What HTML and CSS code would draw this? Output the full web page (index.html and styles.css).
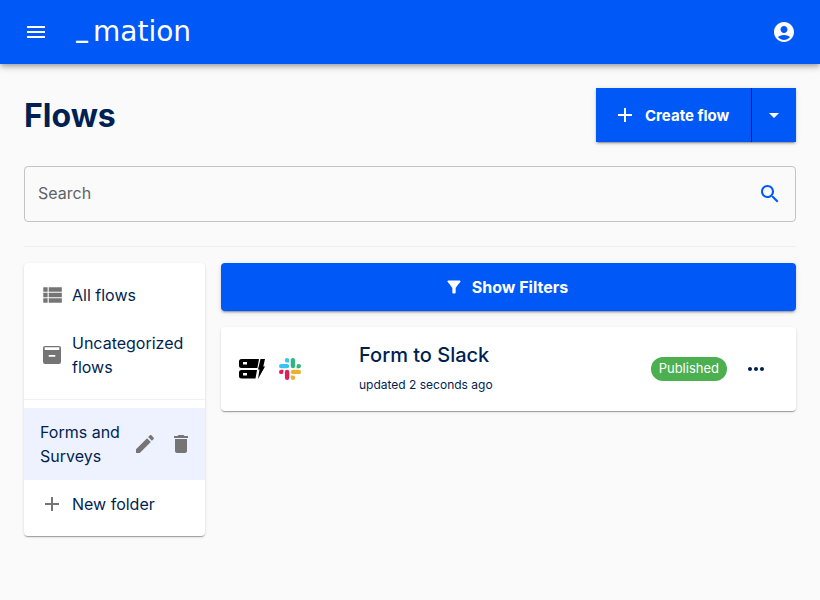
FILE: index.html
```html
<!DOCTYPE html>
<html lang="en">
<head>
<meta charset="utf-8">
<title>Flows</title>
<link rel="stylesheet" href="styles.css">
</head>
<body>
<header class="appbar">
  <svg class="icon menu-icon" viewBox="0 0 24 24"><path d="M3 18h18v-2H3v2zm0-5h18v-2H3v2zm0-7v2h18V6H3z"/></svg>
  <span class="logo"><span class="logo-bar">_</span>mation</span>
  <svg class="icon account-icon" viewBox="0 0 24 24"><path d="M12 2C6.48 2 2 6.48 2 12s4.48 10 10 10 10-4.48 10-10S17.520 2 12 2zm0 4c1.930 0 3.500 1.570 3.500 3.500S13.930 13 12 13s-3.500-1.570-3.500-3.500S10.070 6 12 6zm0 14c-2.030 0-4.430-.82-6.140-2.880C7.550 15.800 9.680 15 12 15s4.450.8 6.140 2.120C16.430 19.180 14.030 20 12 20z"/></svg>
</header>
<main class="page">
  <div class="title-row">
    <h1 class="title">Flows</h1>
    <div class="split-button">
      <button class="create-btn">
        <svg class="icon plus-icon" viewBox="0 0 24 24"><path d="M19 13h-6v6h-2v-6H5v-2h6V5h2v6h6v2z"/></svg>
        Create flow
      </button>
      <button class="caret-btn"><svg class="icon caret-icon" viewBox="0 0 24 24"><path d="M7 10l5 5 5-5z"/></svg></button>
    </div>
  </div>
  <div class="search">
    <span class="search-label">Search</span>
    <svg class="icon search-icon" viewBox="0 0 24 24"><path d="M15.500 14h-.79l-.28-.27C15.410 12.590 16 11.110 16 9.500 16 5.910 13.090 3 9.500 3S3 5.910 3 9.500 5.910 16 9.500 16c1.610 0 3.090-.59 4.230-1.570l.27.28v.79l5 4.990L20.490 19l-4.990-5zm-6 0C7.010 14 5 11.990 5 9.500S7.010 5 9.500 5 14 7.010 14 9.500 11.990 14 9.500 14z"/></svg>
  </div>
  <hr class="divider">
  <div class="columns">
    <aside class="sidebar">
      <div class="side-item side-item-first">
        <svg class="icon side-icon" viewBox="1 1 22 22"><path d="M4 14h4v-4H4v4zm0 5h4v-4H4v4zM4 9h4V5H4v4zm5 5h12v-4H9v4zm0 5h12v-4H9v4zM9 5v4h12V5H9z"/></svg>
        <span>All flows</span>
      </div>
      <div class="side-item side-item-second">
        <svg class="icon side-icon" viewBox="0 0 24 24"><path fill-rule="evenodd" d="M5 3h14a2 2 0 0 1 2 2v14a2 2 0 0 1-2 2H5a2 2 0 0 1-2-2V5a2 2 0 0 1 2-2zM4.700 4.300V7h14.600V4.300zM8.700 12v1.800h6.600V12z"/></svg>
        <span>Uncategorized flows</span>
      </div>
      <div class="side-sep"></div>
      <div class="folder">
        <span class="folder-name">Forms and Surveys</span>
        <svg class="icon folder-icon" viewBox="0 0 24 24"><path d="M3 17.250V21h3.750L17.810 9.940l-3.750-3.750L3 17.250zM20.710 7.040c.39-.39.39-1.020 0-1.410l-2.340-2.340c-.39-.39-1.020-.39-1.410 0l-1.830 1.830 3.750 3.750 1.830-1.830z"/></svg>
        <svg class="icon folder-icon" viewBox="0 0 24 24"><path d="M6 19c0 1.100.9 2 2 2h8c1.100 0 2-.9 2-2V7H6v12zM19 4h-3.500l-1-1h-5l-1 1H5v2h14V4z"/></svg>
      </div>
      <div class="side-item side-item-new">
        <svg class="icon side-icon" viewBox="0 0 24 24"><path d="M19 13h-6v6h-2v-6H5v-2h6V5h2v6h6v2z"/></svg>
        <span>New folder</span>
      </div>
    </aside>
    <section class="content">
      <button class="filter-btn">
        <svg class="icon filter-icon" viewBox="0 0 24 24"><path d="M4.250 5.610C6.270 8.200 10 13 10 13v6c0 .55.45 1 1 1h2c.55 0 1-.45 1-1v-6s3.720-4.800 5.740-7.390C20.250 4.950 19.780 4 18.950 4H5.040c-.83 0-1.300.95-.79 1.610z"/></svg>
        Show Filters
      </button>
      <article class="flow-card">
        <div class="apps">
          <svg class="app-logo" viewBox="0 0 26 22">
            <path fill="#000" fill-rule="evenodd" d="M2.500 1H20l-1.600 9H2.500A2.500 2.500 0 0 1 0 7.500v-4A2.500 2.500 0 0 1 2.500 1zM4 4v2.500h4V4zM2.500 12H18l-1.500 8.500h-14A2.500 2.500 0 0 1 0 18v-3.500A2.500 2.500 0 0 1 2.500 12zM4 15v2.500h4V15z"/>
            <path fill="#000" d="M21.500 1H26l-1.700 7.500H26L19 21l1.500-9.500H19z"/>
          </svg>
          <svg class="app-logo slack-logo" viewBox="0 0 24 24">
            <path fill="#36C5F0" d="M9 1a2.200 2.200 0 0 0 0 4.400h2.200V3.200A2.200 2.200 0 0 0 9 1zm0 5.900H3.200a2.200 2.200 0 0 0 0 4.400H9a2.200 2.200 0 0 0 0-4.400z"/>
            <path fill="#2EB67D" d="M23 9.100a2.200 2.200 0 0 0-4.400 0v2.200h2.200A2.200 2.200 0 0 0 23 9.100zm-5.900 0V3.200a2.200 2.200 0 0 0-4.400 0v5.900a2.200 2.200 0 0 0 4.400 0z"/>
            <path fill="#ECB22E" d="M15 23a2.200 2.200 0 0 0 0-4.400h-2.200v2.200A2.200 2.200 0 0 0 15 23zm0-5.900h5.800a2.200 2.200 0 0 0 0-4.400H15a2.200 2.200 0 0 0 0 4.400z"/>
            <path fill="#E01E5A" d="M1 14.900a2.200 2.200 0 0 0 4.400 0v-2.200H3.200A2.200 2.200 0 0 0 1 14.900zm5.900 0v5.900a2.200 2.200 0 0 0 4.400 0v-5.900a2.200 2.200 0 0 0-4.400 0z"/>
          </svg>
        </div>
        <div class="flow-info">
          <div class="flow-name">Form to Slack</div>
          <div class="flow-time">updated 2 seconds ago</div>
        </div>
        <span class="chip">Published</span>
        <svg class="icon more-icon" viewBox="0 0 24 24"><path d="M6 10c-1.100 0-2 .9-2 2s.9 2 2 2 2-.9 2-2-.9-2-2-2zm12 0c-1.100 0-2 .9-2 2s.9 2 2 2 2-.9 2-2-.9-2-2-2zm-6 0c-1.100 0-2 .9-2 2s.9 2 2 2 2-.9 2-2-.9-2-2-2z"/></svg>
      </article>
    </section>
  </div>
</main>
</body>
</html>
```
FILE: styles.css
```css
* { box-sizing: border-box; }
html, body { margin: 0; height: 100%; overflow: hidden; }
body { background: #fafafa; color: #001f52; font-family: Inter, "Liberation Sans", sans-serif; }
.icon { display: block; flex: none; width: 24px; height: 24px; fill: currentColor; }
.appbar { position: relative; display: flex; align-items: center; height: 64px; padding: 0 24px; background: #0059f7; color: #fff; box-shadow: 0 2px 4px -1px rgba(0,0,0,.2), 0 4px 5px rgba(0,0,0,.14), 0 1px 10px rgba(0,0,0,.12); }
.logo { display: flex; align-items: baseline; margin-left: 28px; font-family: "DejaVu Sans", sans-serif; font-size: 28px; line-height: 34px; margin-top: 1px; }
.logo-bar { width: 17px; font-size: 24px; font-weight: 700; transform: translateY(-4px); }
.account-icon { margin-left: auto; }
.page { padding: 24px 24px 0; }
.title-row { display: flex; align-items: center; justify-content: space-between; height: 54px; }
.title { margin: 2px 0 0; font-size: 32px; font-weight: 700; line-height: 1; letter-spacing: 0; }
.split-button { display: flex; height: 54px; box-shadow: 0 3px 1px -2px rgba(0,0,0,.2), 0 2px 2px rgba(0,0,0,.14), 0 1px 5px rgba(0,0,0,.12); }
.split-button button { display: flex; align-items: center; border: 0; background: #0059f7; color: #fff; font: 700 15px/1 Inter, sans-serif; padding: 0; }
.create-btn { width: 156px; padding-left: 17px !important; gap: 8px; border-right: 1px solid #001f52 !important; }
.caret-btn { width: 44px; justify-content: center; }
.search { display: flex; align-items: center; justify-content: space-between; height: 56px; margin-top: 24px; padding: 0 13px; border: 1px solid #c4c4c4; border-radius: 4px; }
.search-label { font-size: 16px; color: #5f6368; margin-bottom: 2px; }
.search-icon { color: #0059f7; }
.divider { height: 1px; margin: 24px 0 16px; border: 0; background: #efefef; }
.columns { display: flex; align-items: flex-start; gap: 16px; }
.sidebar { flex: none; width: 181px; height: 273px; padding-top: 8px; background: #fff; border-radius: 4px; box-shadow: 0 2px 1px -1px rgba(0,0,0,.2), 0 1px 1px rgba(0,0,0,.14), 0 1px 3px rgba(0,0,0,.12); font-size: 16px; line-height: 24px; }
.side-item { display: flex; align-items: center; gap: 8px; padding: 0 16px; }
.side-icon { color: #757575; }
.side-item-first { height: 48px; }
.side-item-second { height: 72px; }
.side-sep { height: 1px; margin-top: 8px; background: #f0f0f0; }
.folder { display: flex; align-items: center; height: 72px; margin-top: 8px; padding: 0 12px 0 16px; background: #edf2fe; }
.folder-name { width: 93px; flex: none; }
.folder-icon { color: #757575; margin-right: 12px; }
.folder-icon:last-child { margin-right: 0; }
.side-item-new { height: 48px; }
.content { flex: 1; display: flex; flex-direction: column; gap: 16px; min-width: 0; }
.filter-btn { display: flex; align-items: center; justify-content: center; gap: 9px; height: 48px; padding: 0 4px 0 0; border: 0; border-radius: 4px; background: #0059f7; color: #fff; font: 700 16px/1 Inter, sans-serif; box-shadow: 0 3px 1px -2px rgba(0,0,0,.2), 0 2px 2px rgba(0,0,0,.14), 0 1px 5px rgba(0,0,0,.12); }
.filter-icon { width: 18px; height: 18px; transform: scale(1.1); }
.flow-card { display: flex; align-items: center; height: 84px; padding: 0 28px 0 18px; background: #fff; border-radius: 4px; box-shadow: 0 2px 1px -1px rgba(0,0,0,.2), 0 1px 1px rgba(0,0,0,.14), 0 1px 3px rgba(0,0,0,.12); }
.apps { flex: none; display: flex; align-items: center; gap: 13px; width: 120px; }
.app-logo { display: block; width: 26px; height: 22px; }
.slack-logo { width: 24px; height: 24px; }
.flow-info { flex: 1; padding-bottom: 3px; }
.flow-name { font-size: 20px; font-weight: 500; line-height: 28px; }
.flow-time { margin-top: 7px; font-size: 12px; line-height: 18px; }
.chip { display: flex; align-items: center; height: 24px; padding: 0 8px 2px; border-radius: 12px; background: #4caf50; color: #fff; font-size: 13px; }
.more-icon { margin-left: 17px; }
```
